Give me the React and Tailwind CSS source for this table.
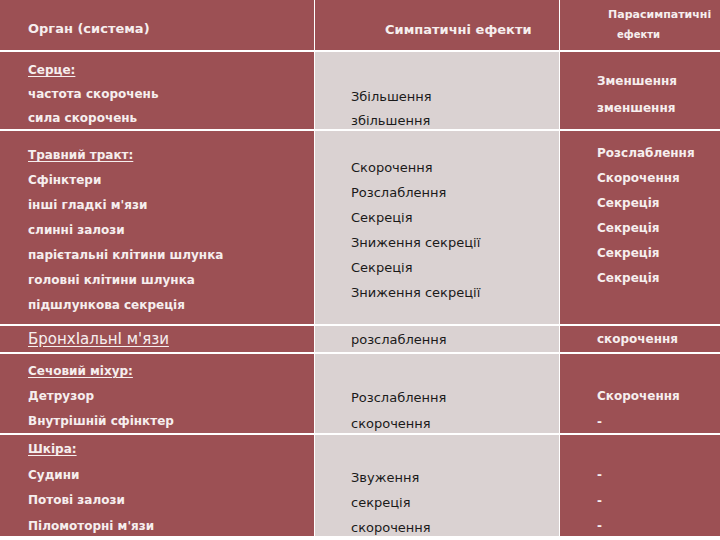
import React from 'react';

const FONT = { fontFamily: '"DejaVu Sans", "Noto Sans", sans-serif' };

// each section: left lines, middle lines, right lines with their own offsets
const SECTIONS = [
  {
    h: 'h-[77px]',
    left: { pt: 'pt-[6px]', lh: 'leading-[24px]', lines: [['Серце:', true], ['частота скорочень'], ['сила скорочень']] },
    mid: { pt: 'pt-[33px]', lh: 'leading-[24px]', lines: ['Збільшення', 'збільшення'] },
    right: { pt: 'pt-[16px]', lh: 'leading-[27px]', lines: ['Зменшення', 'зменшення'] },
  },
  {
    h: 'h-[193px]',
    left: {
      pt: 'pt-[12px]',
      lh: 'leading-[25px]',
      lines: [
        ['Травний тракт:', true],
        ['Сфінктери'],
        ["інші гладкі м'язи"],
        ['слинні залози'],
        ['парієтальні клітини шлунка'],
        ['головні клітини шлунка'],
        ['підшлункова секреція'],
      ],
    },
    mid: {
      pt: 'pt-[24px]',
      lh: 'leading-[25px]',
      lines: ['Скорочення', 'Розслаблення', 'Секреція', 'Зниження секреції', 'Секреція', 'Зниження секреції'],
    },
    right: {
      pt: 'pt-[10px]',
      lh: 'leading-[25px]',
      lines: ['Розслаблення', 'Скорочення', 'Секреція', 'Секреція', 'Секреція', 'Секреція'],
    },
  },
  {
    h: 'h-[26px]',
    left: { pt: 'pt-[1px]', lh: 'leading-[25px]', lines: [["БронхIальнI м'язи", true, true]] },
    mid: { pt: 'pt-[1px]', lh: 'leading-[25px]', lines: ['розслаблення'] },
    right: { pt: 'pt-[1px]', lh: 'leading-[25px]', lines: ['скорочення'] },
  },
  {
    h: 'h-[79px]',
    left: {
      pt: 'pt-[5px]',
      lh: 'leading-[25px]',
      lines: [['Сечовий міхур:', true], ['Детрузор'], ['Внутрішній сфінктер']],
    },
    mid: { pt: 'pt-[31px]', lh: 'leading-[26px]', lines: ['Розслаблення', 'скорочення'] },
    right: { pt: 'pt-[29px]', lh: 'leading-[26px]', lines: ['Скорочення', '-'] },
  },
  {
    h: 'h-[101px]',
    left: {
      pt: 'pt-[2px]',
      lh: 'leading-[25.5px]',
      lines: [['Шкіра:', true], ['Судини'], ['Потові залози'], ["Піломоторні м'язи"]],
    },
    mid: { pt: 'pt-[30px]', lh: 'leading-[25px]', lines: ['Звуження', 'секреція', 'скорочення'] },
    right: { pt: 'pt-[28px]', lh: 'leading-[25.5px]', lines: ['-', '-', '-'] },
  },
];

function Section({ s }) {
  return (
    <div className={`flex gap-x-px shrink-0 ${s.h}`}>
      <div className={`w-[314px] shrink-0 overflow-hidden bg-[#9c5054] pl-[28px] ${s.left.pt}`}>
        {s.left.lines.map(([t, u, big], i) => (
          <div
            key={i}
            className={`${s.left.lh} whitespace-nowrap text-[#f6eeee] ${big ? 'text-[15px] font-normal' : 'text-[12px] font-bold'} ${u ? 'underline underline-offset-2' : ''}`}
          >
            {t}
          </div>
        ))}
      </div>
      <div className={`w-[244px] shrink-0 overflow-hidden bg-[#dad2d2] pl-[36px] ${s.mid.pt}`}>
        {s.mid.lines.map((t, i) => (
          <div key={i} className={`${s.mid.lh} whitespace-nowrap text-[13px] text-[#1a1a1a]`}>
            {t}
          </div>
        ))}
      </div>
      <div className={`flex-1 overflow-hidden bg-[#9c5054] pl-[37px] ${s.right.pt}`}>
        {s.right.lines.map((t, i) => (
          <div key={i} className={`${s.right.lh} whitespace-nowrap text-[12px] font-bold text-[#f6eeee]`}>
            {t}
          </div>
        ))}
      </div>
    </div>
  );
}

export default function App() {
  return (
    <div className="w-[720px] h-[540px] bg-white overflow-hidden flex flex-col" style={FONT}>
      {/* header */}
      <div className="flex gap-x-px h-[50px] shrink-0">
        <div className="w-[314px] shrink-0 bg-[#9c5054] pl-[28px] flex items-center pt-[8px] text-[13px] font-bold text-[#f6eeee]">
          Орган (система)
        </div>
        <div className="w-[244px] shrink-0 bg-[#9c5054] pl-[70px] flex items-center pt-[10px] text-[13px] font-bold text-[#f6eeee]">
          Симпатичні ефекти
        </div>
        <div className="flex-1 bg-[#9c5054] pl-[48px] pt-[6px] text-[#f6eeee] font-bold">
          <div className="text-[11px] leading-[18px]">Парасимпатичні</div>
          <div className="text-[10px] leading-[22px] pl-[9px]">ефекти</div>
        </div>
      </div>
      <div className="flex flex-col gap-y-[2px] pt-[2px]">
        {SECTIONS.map((s, i) => (
          <Section key={i} s={s} />
        ))}
      </div>
    </div>
  );
}
